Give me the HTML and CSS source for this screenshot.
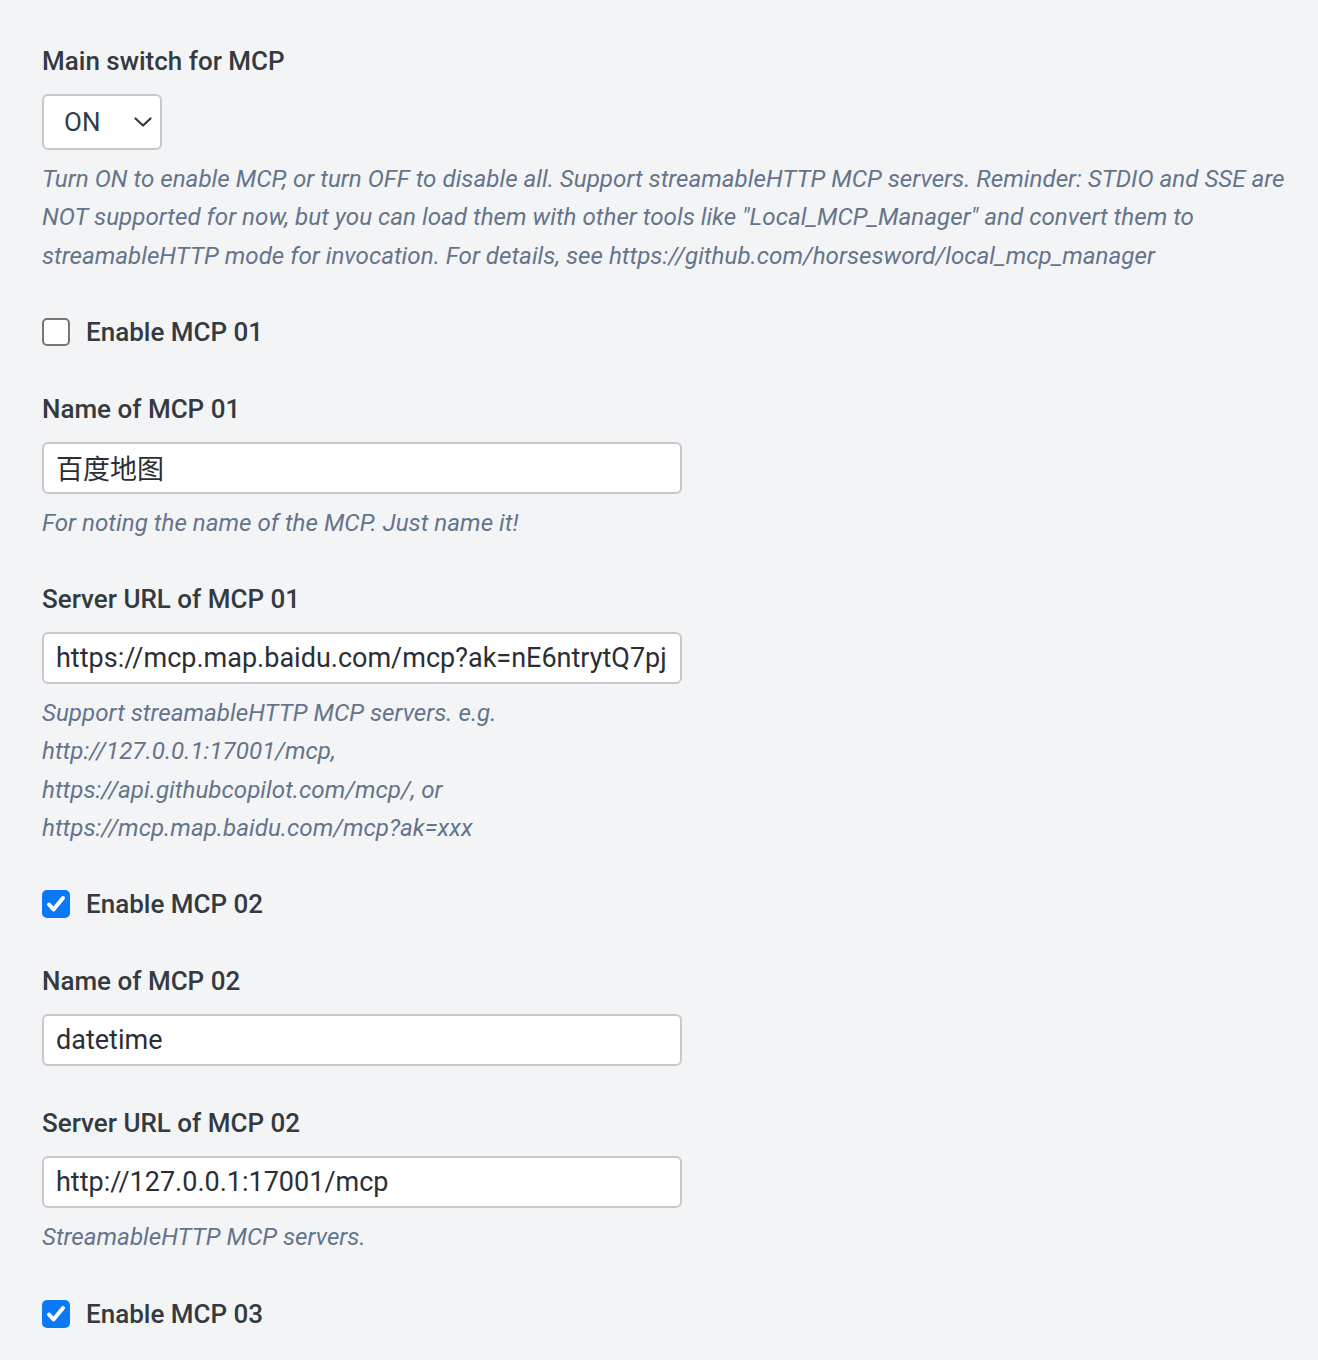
FILE: index.html
```html
<!DOCTYPE html>
<html lang="en">
<head>
<meta charset="utf-8">
<title>MCP settings</title>
<link rel="stylesheet" href="styles.css">
</head>
<body>
<main class="form">
  <div class="field">
    <div class="label">Main switch for MCP</div>
    <div class="select">
      <span>ON</span>
      <svg width="18" height="12" viewBox="0 0 18 12"><path d="M1.5 2.5 L9 9.5 L16.5 2.5" fill="none" stroke="#343a40" stroke-width="2.2" stroke-linecap="round" stroke-linejoin="round"/></svg>
    </div>
    <p class="help wide">Turn ON to enable MCP, or turn OFF to disable all. Support streamableHTTP MCP servers. Reminder: STDIO and SSE are NOT supported for now, but you can load them with other tools like "Local_MCP_Manager" and convert them to streamableHTTP mode for invocation. For details, see https://github.com/horsesword/local_mcp_manager</p>
  </div>

  <div class="check">
    <span class="box"></span>
    <span class="check-label">Enable MCP 01</span>
  </div>

  <div class="field">
    <div class="label">Name of MCP 01</div>
    <input class="input" type="text" value="百度地图">
    <p class="help">For noting the name of the MCP. Just name it!</p>
  </div>

  <div class="field">
    <div class="label">Server URL of MCP 01</div>
    <input class="input" type="text" value="https://mcp.map.baidu.com/mcp?ak=nE6ntrytQ7pjC8xYz">
    <p class="help">Support streamableHTTP MCP servers. e.g.<br>http://127.0.0.1:17001/mcp,<br>https://api.githubcopilot.com/mcp/, or<br>https://mcp.map.baidu.com/mcp?ak=xxx</p>
  </div>

  <div class="check">
    <span class="box on"><svg width="28" height="28" viewBox="0 0 28 28"><path d="M7 14.5 L11.5 19.5 L21 8" fill="none" stroke="#fff" stroke-width="4" stroke-linecap="round" stroke-linejoin="round"/></svg></span>
    <span class="check-label">Enable MCP 02</span>
  </div>

  <div class="field">
    <div class="label">Name of MCP 02</div>
    <input class="input" type="text" value="datetime">
  </div>

  <div class="field">
    <div class="label">Server URL of MCP 02</div>
    <input class="input" type="text" value="http://127.0.0.1:17001/mcp">
    <p class="help">StreamableHTTP MCP servers.</p>
  </div>

  <div class="check">
    <span class="box on"><svg width="28" height="28" viewBox="0 0 28 28"><path d="M7 14.5 L11.5 19.5 L21 8" fill="none" stroke="#fff" stroke-width="4" stroke-linecap="round" stroke-linejoin="round"/></svg></span>
    <span class="check-label">Enable MCP 03</span>
  </div>
</main>
</body>
</html>
```

FILE: styles.css
```css
html, body {
  margin: 0;
  background: #f3f4f6;
}

body {
  font-family: Roboto, "Noto Sans CJK SC", sans-serif;
  color: #343a40;
}

.form {
  display: flex;
  flex-direction: column;
  gap: 39px;
  padding: 43px 24px 40px 42px;
}

.field {
  display: flex;
  flex-direction: column;
  align-items: flex-start;
}

.label {
  font-size: 26px;
  font-weight: 500;
  line-height: 36px;
  margin-bottom: 15px;
}

.select {
  box-sizing: border-box;
  width: 120px;
  height: 56px;
  border: 2px solid #c7c9cc;
  border-radius: 6px;
  background: #fff;
  display: flex;
  align-items: center;
  justify-content: space-between;
  padding: 0 8px 0 20px;
  font-size: 26px;
}

.input {
  box-sizing: border-box;
  width: 640px;
  height: 52px;
  border: 2px solid #c7c9cc;
  border-radius: 6px;
  background: #fff;
  padding: 0 12px;
  font-family: Roboto, "Noto Sans CJK SC", sans-serif;
  font-size: 27px;
  color: #2b2f35;
  margin: 0;
  outline: none;
}

.help {
  margin: 10px 0 0;
  max-width: 640px;
  font-size: 24.2px;
  line-height: 38.3px;
  font-style: italic;
  color: #64748b;
}

.help.wide {
  max-width: none;
}

.check {
  display: flex;
  align-items: center;
  gap: 16px;
  height: 36px;
  margin-bottom: 2px;
}

.box {
  box-sizing: border-box;
  width: 28px;
  height: 28px;
  border: 2px solid #767676;
  border-radius: 5px;
  background: #fff;
  display: flex;
  align-items: center;
  justify-content: center;
}

.box.on {
  background: #0b78f5;
  border-color: #0b78f5;
}

.box svg {
  flex: none;
}

.check-label {
  font-size: 26px;
  font-weight: 500;
  line-height: 36px;
}
```
